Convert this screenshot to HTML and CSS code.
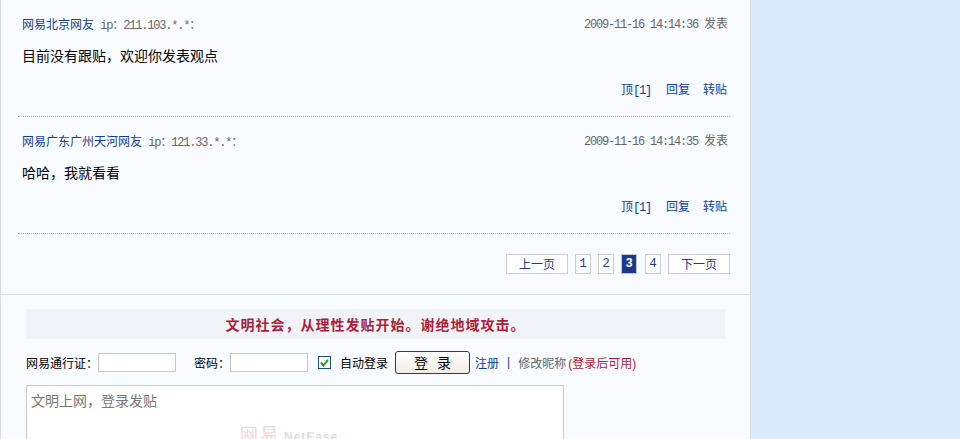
FILE: index.html
```html
<!DOCTYPE html>
<html>
<head>
    <meta charset="UTF-8">
    <title>网易跟贴</title>
    <link rel="stylesheet" href="styles.css">
</head>
<body>
    <div class="panel">
        <div class="post">
            <div class="post-head">
                <div><a class="user" href="#">网易北京网友</a> <span class="ip">ip：211.103.*.*：</span></div>
                <div class="time">2009-11-16 14:14:36 <span class="time-label">发表</span></div>
            </div>
            <div class="post-body">目前没有跟贴，欢迎你发表观点</div>
            <div class="post-actions">
                <a href="#">顶<span class="num">[1]</span></a>
                <a href="#">回复</a>
                <a href="#">转贴</a>
            </div>
        </div>
        <div class="post">
            <div class="post-head">
                <div><a class="user" href="#">网易广东广州天河网友</a> <span class="ip">ip：121.33.*.*：</span></div>
                <div class="time">2009-11-16 14:14:35 <span class="time-label">发表</span></div>
            </div>
            <div class="post-body">哈哈，我就看看</div>
            <div class="post-actions">
                <a href="#">顶<span class="num">[1]</span></a>
                <a href="#">回复</a>
                <a href="#">转贴</a>
            </div>
        </div>
        <div class="pager">
            <a class="page-btn wide" href="#">上一页</a>
            <a class="page-btn" href="#">1</a>
            <a class="page-btn" href="#">2</a>
            <span class="page-btn current">3</span>
            <a class="page-btn" href="#">4</a>
            <a class="page-btn wide" href="#">下一页</a>
        </div>
        <div class="reply">
            <div class="notice">文明社会，从理性发贴开始。谢绝地域攻击。</div>
            <div class="login-row">
                <label class="field-name">网易通行证：</label>
                <input class="login-input" type="text">
                <label class="field-name pass-name">密码：</label>
                <input class="login-input" type="text">
                <span class="check">
                    <svg width="13" height="13" viewBox="0 0 13 13"><rect x="0.5" y="0.5" width="12" height="12" fill="#fff" stroke="#1c5180"/><path d="M3 6.5 L5.5 9.5 L10 3.8" fill="none" stroke="#21a121" stroke-width="2"/></svg>
                </span>
                <span class="auto-login">自动登录</span>
                <button class="login-btn" type="button">登 录</button>
                <a class="reg" href="#">注册</a>
                <span class="sep">|</span>
                <span class="nick">修改昵称</span>
                <span class="nick-hint">(登录后可用)</span>
            </div>
            <div class="editor">
                文明上网，登录发贴
                <div class="watermark"><span class="wm-cn">网易</span> <span class="wm-en">NetEase</span></div>
            </div>
        </div>
    </div>
</body>
</html>
```

FILE: styles.css
```css
* {
    box-sizing: border-box;
}

html, body {
    height: 439px;
    overflow: hidden;
}

body {
    margin: 0;
    background: #dcebfa;
    font-family: "Liberation Sans", "Noto Sans CJK SC", sans-serif;
    font-size: 12px;
    color: #000;
}

a {
    color: #0f3f96;
    text-decoration: none;
}

.panel {
    width: 751px;
    height: 439px;
    overflow: hidden;
    background: #f8fbff;
    border-left: 1px solid #d5dce4;
    border-right: 1px solid #d5dce4;
}

.post {
    margin: 0 20px 0 17px;
    height: 117px;
    padding: 16px 3px 0 4px;
    border-bottom: 1px dotted #b4b4b4;
}

.post-head {
    display: flex;
    justify-content: space-between;
    line-height: 18px;
}

.ip, .time {
    font-family: "Liberation Mono", "Noto Sans CJK SC", monospace;
    font-size: 12px;
    letter-spacing: -1.2px;
    color: #666;
}

.ip {
    margin-left: 3px;
}

.time {
    margin: -2px -1px 0 0;
}

.time-label {
    font-family: "Noto Sans CJK SC", sans-serif;
    font-size: 12px;
    letter-spacing: 0;
}

.post-body {
    margin-top: 10px;
    font-size: 14px;
    line-height: 22px;
}

.post-actions {
    display: flex;
    justify-content: flex-end;
    gap: 13px;
    margin-top: 14px;
    line-height: 18px;
}

.num {
    font-family: "Liberation Mono", monospace;
    font-size: 12px;
    letter-spacing: -1.2px;
    margin-right: 2px;
}

.pager {
    display: flex;
    justify-content: flex-end;
    gap: 7px;
    height: 61px;
    padding: 20px 20px 0 0;
    border-bottom: 1px solid #d5dce4;
}

.page-btn {
    width: 16px;
    height: 20px;
    line-height: 18px;
    text-align: center;
    background: #fff;
    border: 1px solid #ccc;
    color: #1f3a8a;
    font-family: "Liberation Mono", "Noto Sans CJK SC", monospace;
    font-size: 12px;
}

.page-btn.wide {
    width: 62px;
    font-family: "Noto Sans CJK SC", sans-serif;
}

.page-btn.current {
    margin-right: 1px;
    background: #1f3a8a;
    border-color: #c0c8d8;
    color: #fff;
    font-weight: bold;
}

.reply {
    padding: 14px 0 0 25px;
}

.notice {
    width: 699px;
    height: 30px;
    line-height: 30px;
    text-align: center;
    background: #f0f4f8;
    color: #b01c38;
    font-family: "Noto Sans CJK SC", sans-serif;
    font-size: 14px;
    font-weight: bold;
    letter-spacing: 1px;
}

.login-row {
    display: flex;
    align-items: center;
    height: 24px;
    margin-top: 11px;
}

.field-name {
    white-space: nowrap;
}

.pass-name {
    margin-left: 18px;
}

.login-input {
    width: 78px;
    height: 19px;
    margin: 1px 0 0 0;
    padding: 0;
    background: #fff;
    border: 1px solid #c8c8c8;
}

.check {
    display: flex;
    margin-left: 10px;
}

.auto-login {
    margin-left: 9px;
}

.login-btn {
    width: 75px;
    height: 23px;
    margin: 0 0 0 7px;
    padding: 0;
    background: linear-gradient(#fff, #efece2);
    border: 1px solid #1f3f73;
    border-radius: 3px;
    color: #000;
    font-family: "Noto Sans CJK SC", sans-serif;
    font-size: 14px;
    word-spacing: 6px;
    line-height: 19px;
}

.reg {
    margin-left: 5px;
}

.sep {
    margin-left: 8px;
    color: #0f3f96;
}

.nick {
    margin-left: 8px;
    color: #666;
}

.nick-hint {
    margin-left: 2px;
    color: #b01c38;
}

.editor {
    position: relative;
    width: 538px;
    height: 100px;
    margin-top: 11px;
    padding: 5px 4px;
    background: #fff;
    border: 1px solid #ccc;
    color: #777;
    font-size: 14px;
    line-height: 20px;
}

.watermark {
    position: absolute;
    left: 213px;
    top: 39px;
    white-space: nowrap;
}

.wm-cn {
    color: #f6d6d6;
    font-size: 18px;
    letter-spacing: 2px;
}

.wm-en {
    color: #ddd;
    font-size: 12px;
    font-weight: bold;
    letter-spacing: 1px;
}
```
